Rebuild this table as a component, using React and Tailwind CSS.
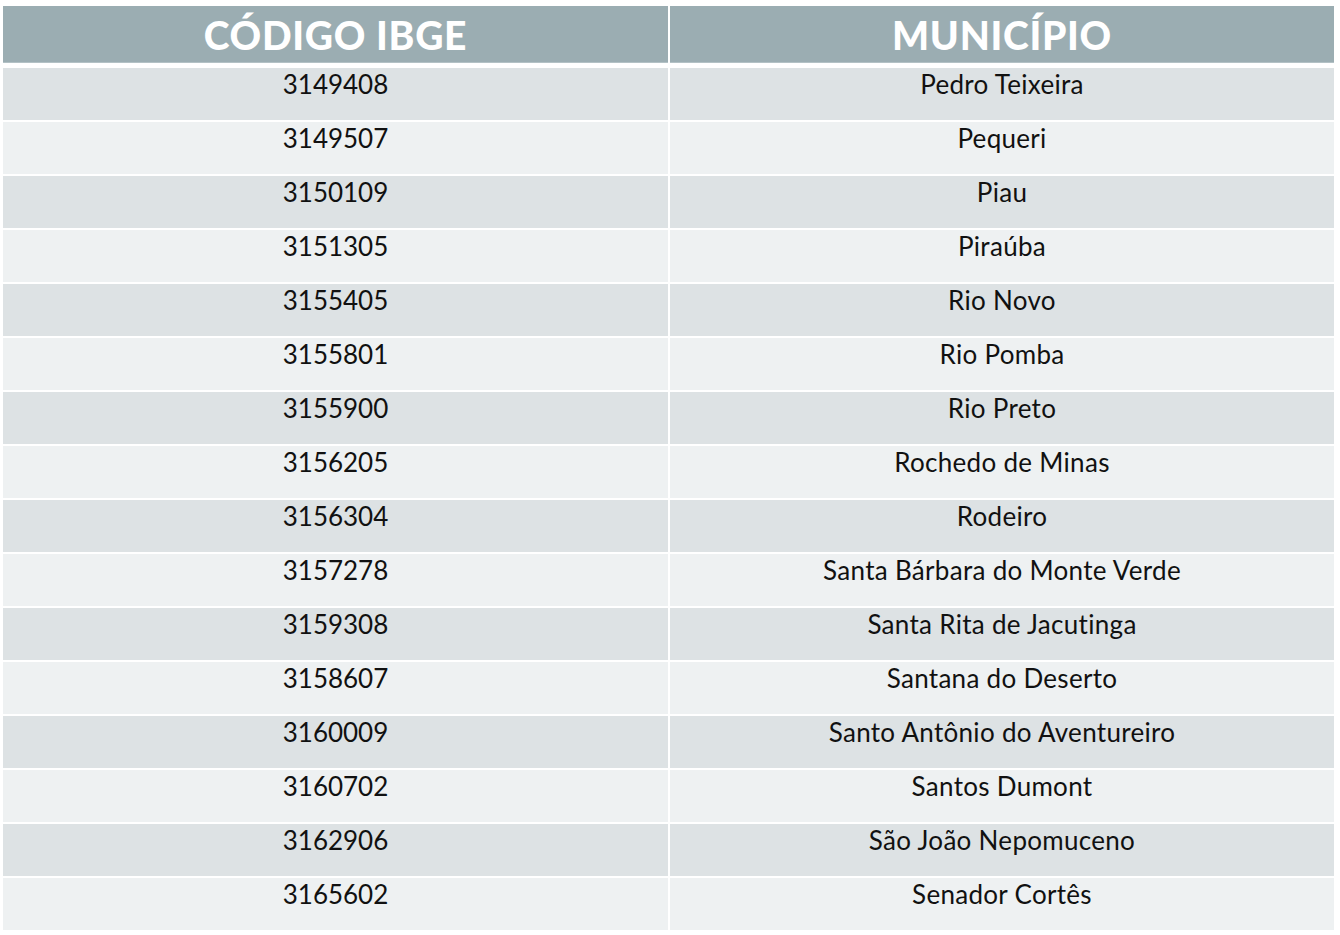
const rows = [
  ['3149408', 'Pedro Teixeira'],
  ['3149507', 'Pequeri'],
  ['3150109', 'Piau'],
  ['3151305', 'Piraúba'],
  ['3155405', 'Rio Novo'],
  ['3155801', 'Rio Pomba'],
  ['3155900', 'Rio Preto'],
  ['3156205', 'Rochedo de Minas'],
  ['3156304', 'Rodeiro'],
  ['3157278', 'Santa Bárbara do Monte Verde'],
  ['3159308', 'Santa Rita de Jacutinga'],
  ['3158607', 'Santana do Deserto'],
  ['3160009', 'Santo Antônio do Aventureiro'],
  ['3160702', 'Santos Dumont'],
  ['3162906', 'São João Nepomuceno'],
  ['3165602', 'Senador Cortês'],
];

export default function App() {
  return (
    <div className="w-[1340px] h-[935px] bg-white pt-[6px] pl-[3px]" style={{ fontFamily: 'Lato, "Open Sans", sans-serif' }}>
      {/* Header */}
      <div className="flex gap-[2px] w-[1331px] h-[57px] mb-[5px]">
        <div className="w-[665px] bg-[#9badb2] border-b border-[#b3c1c5] flex items-center justify-center pt-[3px] text-white font-black text-[39px] tracking-[0.7px]">
          CÓDIGO IBGE
        </div>
        <div className="w-[664px] bg-[#9badb2] border-b border-[#b3c1c5] flex items-center justify-center pt-[3px] text-white font-black text-[39px] tracking-[0.7px]">
          MUNICÍPIO
        </div>
      </div>

      {/* Body */}
      {rows.map(([code, name], i) => (
        <div key={code} className="flex gap-[2px] w-[1331px] h-[52px] mb-[2px] text-[26px] text-[#111]">
          <div className={`w-[665px] flex justify-center leading-[32px] ${i % 2 === 0 ? 'bg-[#dde2e4]' : 'bg-[#eef1f2]'}`}>
            {code}
          </div>
          <div className={`w-[664px] flex justify-center leading-[32px] tracking-[0.3px] ${i % 2 === 0 ? 'bg-[#dde2e4]' : 'bg-[#eef1f2]'}`}>
            {name}
          </div>
        </div>
      ))}
    </div>
  );
}
